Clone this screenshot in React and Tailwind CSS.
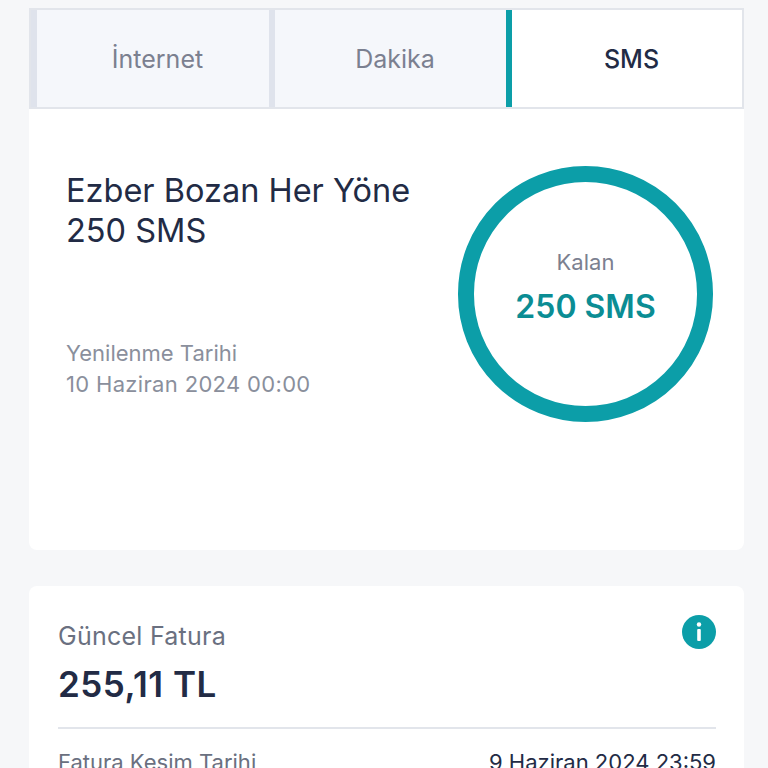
function Tab({ label, active, className }) {
  return (
    <div
      className={`flex items-center justify-center border-l-[6px] pl-[9px] pt-0.5 text-[25px] ${
        active
          ? "border-l-[#0c9ea8] bg-white font-medium text-[#222b45]"
          : "border-l-[#dfe3ec] bg-[#f5f7fb] text-[#7b8090]"
      } ${className}`}
    >
      {label}
    </div>
  );
}

export default function App() {
  return (
    <div
      className="h-[768px] overflow-hidden bg-[#f6f7f9] pl-[29px] pr-6 pt-2"
      style={{ fontFamily: '"Inter", "Noto Sans", sans-serif' }}
    >
      <div className="flex h-[101px] border-2 border-[#e2e5eb]">
        <Tab label="İnternet" className="w-[238px]" />
        <Tab label="Dakika" className="w-[237px]" />
        <Tab label="SMS" active className="flex-1" />
      </div>

      <div className="flex h-[441px] justify-between rounded-b-lg bg-white pl-[37px] pr-[31px] pt-[57px]">
        <div>
          <h2 className="pt-[5px] text-[32.5px] leading-[40px] text-[#222b45]">
            Ezber Bozan Her Yöne
            <br />
            250 SMS
          </h2>
          <p className="mt-[87px] text-[22px] leading-[31px] text-[#8a8f9c]">
            Yenilenme Tarihi
            <br />
            <span className="tracking-[0.33px]">10 Haziran 2024 00:00</span>
          </p>
        </div>
        <div className="flex h-[256px] w-[255px] flex-col items-center justify-center rounded-full border-[16px] border-[#0c9ea8]">
          <span className="text-[22px] text-[#7b8090]">Kalan</span>
          <span className="mb-[13px] mt-1.5 text-[32px] font-semibold leading-[44px] text-[#0b8d94]">250 SMS</span>
        </div>
      </div>

      <div className="mt-9 rounded-lg bg-white pl-[29px] pr-[28px] pt-[29px]">
        <div className="flex items-start justify-between">
          <div className="pt-1">
            <p className="text-[25px] leading-[34px] tracking-[0.25px] text-[#6a7080]">Güncel Fatura</p>
            <p className="mt-2.5 text-[35px] font-semibold leading-[42px] tracking-[0.5px] text-[#222b45]">255,11 TL</p>
          </div>
          <svg viewBox="0 0 34 34" className="h-[34px] w-[34px]">
            <circle cx="17" cy="17" r="17" fill="#0c9ea8" />
            <circle cx="17" cy="9.5" r="2.2" fill="#fff" />
            <rect x="15.2" y="14" width="3.6" height="12" rx="1" fill="#fff" />
          </svg>
        </div>
        <div className="mt-[22px] h-0.5 bg-[#e2e5eb]" />
        <div className="mt-[18px] flex justify-between text-[22px] leading-[30px]">
          <span className="text-[#6a7080]">Fatura Kesim Tarihi</span>
          <span className="text-[#222b45]">9 Haziran 2024 23:59</span>
        </div>
      </div>
    </div>
  );
}
